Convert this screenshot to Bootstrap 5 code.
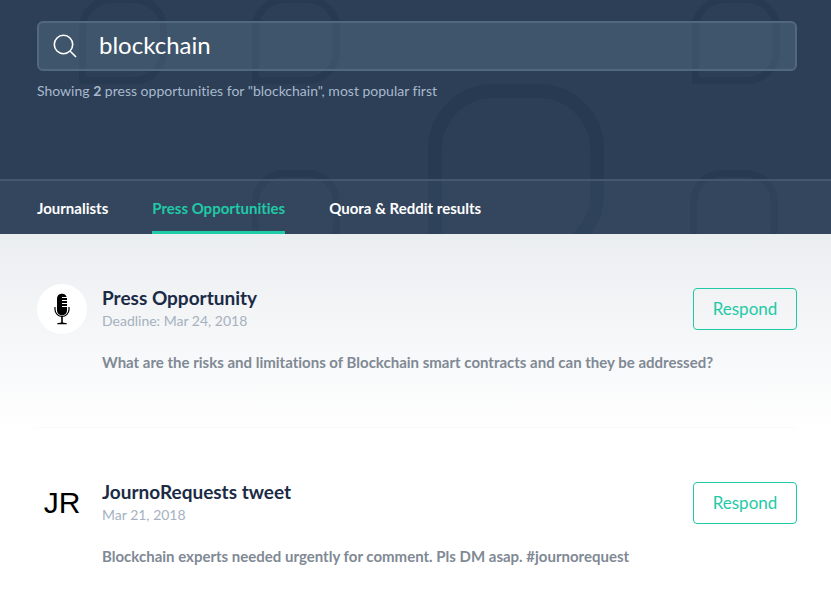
<!DOCTYPE html>
<html lang="en">
<head>
<meta charset="utf-8">
<meta name="viewport" content="width=device-width, initial-scale=1">
<title>Press Opportunities</title>
<link href="https://cdn.jsdelivr.net/npm/bootstrap@5.3.0/dist/css/bootstrap.min.css" rel="stylesheet">
<style>
  body { font-family: Lato, "Open Sans", sans-serif; font-variant-ligatures: none; color: #1b2b45; background: #fff; }
  .page-gutter { padding-left: 37px; padding-right: 34px; }
  .hero { background: #2c3f57; }
  .hero-pattern { z-index: 0; }
  .hero-content { z-index: 1; }
  .search-area { padding-top: 21px; padding-bottom: 78px; }
  .search-field { background: rgba(101, 125, 146, .35); border: 2px solid #526780; border-radius: 6px; height: 50px; padding-left: 14px; }
  .search-field input, .search-field input:focus { background: transparent; color: #fff; font-size: 24px; line-height: 32px; border: 0; box-shadow: none; padding: 0 0 2px 22px; }
  .summary { font-size: 14px; line-height: 20px; color: #a9b9cc; padding-top: 10px; }
  .tab-bar { background: rgba(101, 125, 146, .13); border-top: 2px solid #435870; }
  .tab-list { gap: 44px; }
  .tab-link { display: block; color: #fff; font-size: 15px; line-height: 20px; font-weight: 700; text-decoration: none; padding: 17px 0 13px; border-bottom: 3px solid transparent; }
  .tab-link.active { color: #1fcaa6; border-color: #1fcaa6; }
  .results { background: linear-gradient(#ebeef1, #fff 200px); padding-top: 50px; }
  .result { padding-bottom: 54px; border-bottom: 1px solid #fafafb; margin-bottom: 50px; gap: 15px; }
  .result:last-child { border: 0; margin: 0; padding-bottom: 20px; }
  .avatar { width: 50px; height: 50px; background: #fff; }
  .initials { font-family: "Liberation Sans", Arial, sans-serif; font-size: 30px; line-height: 38px; color: #000; }
  .result-title { font-size: 19px; line-height: 26px; font-weight: 700; margin: 1px 0 0; }
  .result-date { font-size: 14px; line-height: 20px; color: #a6b1bf; margin-bottom: 20px; }
  .result-text { font-size: 15px; line-height: 22px; font-weight: 700; color: #808994; margin-bottom: 0; }
  .btn-respond { width: 104px; height: 42px; margin-top: 4px; border: 1px solid #1fcaa6; border-radius: 4px; color: #1fcaa6; font-size: 17px; line-height: 24px; padding: 0; }
  .btn-respond:hover { background: #1fcaa6; color: #fff; }
</style>
<script src="https://cdn.jsdelivr.net/npm/bootstrap@5.3.0/dist/js/bootstrap.bundle.min.js"></script>
</head>
<body>
<header class="hero position-relative overflow-hidden">
  <svg class="hero-pattern position-absolute top-0 start-0 w-100 h-100" fill="none" stroke="#273a52" aria-hidden="true">
    <defs>
      <path id="tile" d="M3.5 84.500V32.500A29 29 0 0 1 32.500 3.500H55.500A29 29 0 0 1 84.500 32.500V55.500A29 29 0 0 1 55.500 84.500Z"/>
    </defs>
    <g stroke-width="7">
      <use href="#tile" x="79" y="-4"/>
      <use href="#tile" x="252" y="-4"/>
      <use href="#tile" x="692" y="-4"/>
      <use href="#tile" x="252" y="170"/>
      <use href="#tile" x="690" y="170"/>
      <use href="#tile" transform="translate(428 84) scale(2)"/>
    </g>
  </svg>
  <div class="hero-content position-relative">
    <form class="search-area page-gutter">
      <div class="search-field d-flex align-items-center">
        <label for="q" class="d-flex">
          <svg width="24" height="24" viewBox="0 0 24 24" fill="none" stroke="#fff" stroke-width="1.600" role="img" aria-label="Search"><circle cx="10.500" cy="10.500" r="9.200"/><path d="M17 17l6 6"/></svg>
        </label>
        <input id="q" type="text" class="form-control" value="blockchain">
      </div>
      <p class="summary mb-0">Showing <b>2</b> press opportunities for "blockchain", most popular first</p>
    </form>
    <nav class="tab-bar page-gutter" aria-label="Result types">
      <ul class="tab-list list-unstyled d-flex mb-0">
        <li><a class="tab-link" href="#journalists">Journalists</a></li>
        <li><a class="tab-link active" href="#press" aria-current="page">Press Opportunities</a></li>
        <li><a class="tab-link" href="#quora">Quora &amp; Reddit results</a></li>
      </ul>
    </nav>
  </div>
</header>
<main class="results page-gutter" id="press">
  <article class="result d-flex align-items-start">
    <div class="avatar rounded-circle flex-shrink-0 d-flex align-items-center justify-content-center">
      <svg width="16" height="32" viewBox="0 0 16 32" aria-hidden="true">
        <path fill="#000" d="M3 5.500a5 5 0 0 1 9.700-1.500H8v1h5v2H8v1h5v2H8v1h5v2H8v1h5v3.500a5 5 0 0 1-10 0z"/>
        <path fill="none" stroke="#000" stroke-width="1.200" d="M1 14v2.500a7 7 0 0 0 14 0V14"/>
        <path fill="#000" d="M7.200 23h1.600v6.500l4 .7V31.300H3.200v-1.100l4-.7z"/>
      </svg>
    </div>
    <div class="flex-grow-1">
      <div class="d-flex justify-content-between align-items-start">
        <div>
          <h2 class="result-title">Press Opportunity</h2>
          <p class="result-date">Deadline: Mar 24, 2018</p>
        </div>
        <button type="button" class="btn btn-respond">Respond</button>
      </div>
      <p class="result-text">What are the risks and limitations of Blockchain smart contracts and can they be addressed?</p>
    </div>
  </article>
  <article class="result d-flex align-items-start">
    <div class="avatar rounded-circle flex-shrink-0 d-flex align-items-center justify-content-center">
      <span class="initials">JR</span>
    </div>
    <div class="flex-grow-1">
      <div class="d-flex justify-content-between align-items-start">
        <div>
          <h2 class="result-title">JournoRequests tweet</h2>
          <p class="result-date">Mar 21, 2018</p>
        </div>
        <button type="button" class="btn btn-respond">Respond</button>
      </div>
      <p class="result-text">Blockchain experts needed urgently for comment. Pls DM asap. #journorequest</p>
    </div>
  </article>
</main>
</body>
</html>
